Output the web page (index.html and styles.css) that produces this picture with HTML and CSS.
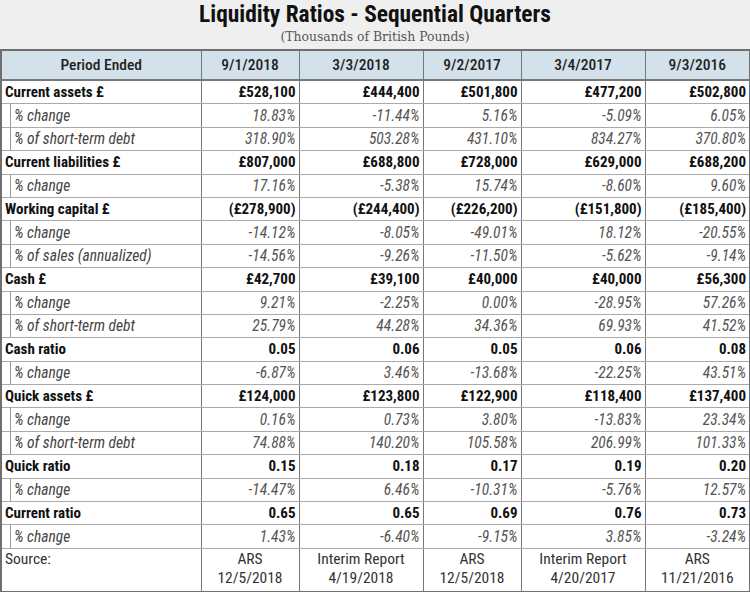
FILE: index.html
```html
<!DOCTYPE html>
<html>
<head>
<meta charset="utf-8">
<link rel="stylesheet" href="styles.css">
</head>
<body>
<div class="page">
  <h1 class="title">Liquidity Ratios - Sequential Quarters</h1>
  <div class="subtitle">(Thousands of British Pounds)</div>
  <table class="ratios">
    <colgroup>
      <col class="c-label"><col class="c-a"><col class="c-b"><col class="c-a"><col class="c-b"><col class="c-c">
    </colgroup>
    <thead>
      <tr><th>Period Ended</th><th>9/1/2018</th><th>3/3/2018</th><th>9/2/2017</th><th>3/4/2017</th><th>9/3/2016</th></tr>
    </thead>
    <tbody>
      <tr class="main"><td>Current assets £</td><td>£528,100</td><td>£444,400</td><td>£501,800</td><td>£477,200</td><td>£502,800</td></tr>
      <tr class="sub"><td>% change</td><td>18.83%</td><td>-11.44%</td><td>5.16%</td><td>-5.09%</td><td>6.05%</td></tr>
      <tr class="sub"><td>% of short-term debt</td><td>318.90%</td><td>503.28%</td><td>431.10%</td><td>834.27%</td><td>370.80%</td></tr>
      <tr class="main"><td>Current liabilities £</td><td>£807,000</td><td>£688,800</td><td>£728,000</td><td>£629,000</td><td>£688,200</td></tr>
      <tr class="sub"><td>% change</td><td>17.16%</td><td>-5.38%</td><td>15.74%</td><td>-8.60%</td><td>9.60%</td></tr>
      <tr class="main"><td>Working capital £</td><td>(£278,900)</td><td>(£244,400)</td><td>(£226,200)</td><td>(£151,800)</td><td>(£185,400)</td></tr>
      <tr class="sub"><td>% change</td><td>-14.12%</td><td>-8.05%</td><td>-49.01%</td><td>18.12%</td><td>-20.55%</td></tr>
      <tr class="sub"><td>% of sales (annualized)</td><td>-14.56%</td><td>-9.26%</td><td>-11.50%</td><td>-5.62%</td><td>-9.14%</td></tr>
      <tr class="main"><td>Cash £</td><td>£42,700</td><td>£39,100</td><td>£40,000</td><td>£40,000</td><td>£56,300</td></tr>
      <tr class="sub"><td>% change</td><td>9.21%</td><td>-2.25%</td><td>0.00%</td><td>-28.95%</td><td>57.26%</td></tr>
      <tr class="sub"><td>% of short-term debt</td><td>25.79%</td><td>44.28%</td><td>34.36%</td><td>69.93%</td><td>41.52%</td></tr>
      <tr class="main"><td>Cash ratio</td><td>0.05</td><td>0.06</td><td>0.05</td><td>0.06</td><td>0.08</td></tr>
      <tr class="sub"><td>% change</td><td>-6.87%</td><td>3.46%</td><td>-13.68%</td><td>-22.25%</td><td>43.51%</td></tr>
      <tr class="main"><td>Quick assets £</td><td>£124,000</td><td>£123,800</td><td>£122,900</td><td>£118,400</td><td>£137,400</td></tr>
      <tr class="sub"><td>% change</td><td>0.16%</td><td>0.73%</td><td>3.80%</td><td>-13.83%</td><td>23.34%</td></tr>
      <tr class="sub"><td>% of short-term debt</td><td>74.88%</td><td>140.20%</td><td>105.58%</td><td>206.99%</td><td>101.33%</td></tr>
      <tr class="main"><td>Quick ratio</td><td>0.15</td><td>0.18</td><td>0.17</td><td>0.19</td><td>0.20</td></tr>
      <tr class="sub"><td>% change</td><td>-14.47%</td><td>6.46%</td><td>-10.31%</td><td>-5.76%</td><td>12.57%</td></tr>
      <tr class="main"><td>Current ratio</td><td>0.65</td><td>0.65</td><td>0.69</td><td>0.76</td><td>0.73</td></tr>
      <tr class="sub"><td>% change</td><td>1.43%</td><td>-6.40%</td><td>-9.15%</td><td>3.85%</td><td>-3.24%</td></tr>
      <tr class="source"><td>Source:</td><td>ARS<br>12/5/2018</td><td>Interim Report<br>4/19/2018</td><td>ARS<br>12/5/2018</td><td>Interim Report<br>4/20/2017</td><td>ARS<br>11/21/2016</td></tr>
    </tbody>
  </table>
</div>
</body>
</html>
```

FILE: styles.css
```css
html, body {
  margin: 0;
  padding: 0;
  background: #efefef;
}
.page {
  width: 750px;
  font-family: "Roboto Condensed", "Roboto", "Liberation Sans Narrow", sans-serif;
  font-stretch: condensed;
}
.title {
  margin: 0;
  height: 25px;
  text-align: center;
  font-size: 23.4px;
  font-weight: 700;
  line-height: 28px;
  color: #111;
}
.subtitle {
  text-align: center;
  font-family: "Roboto Slab", "DejaVu Serif", "Liberation Serif", serif;
  font-stretch: normal;
  font-size: 12.4px;
  font-weight: 300;
  line-height: 20px;
  height: 20px;
  padding-top: 2px;
  margin-bottom: 2px;
  color: #555;
}
.ratios {
  width: 749px;
  border-collapse: collapse;
  background: #fff;
  border: 2px solid #6f6f6f;
  table-layout: fixed;
  font-size: 15px;
}
.c-label { width: 200px; }
.c-a { width: 98px; }
.c-b { width: 124px; }
.c-c { width: 105px; }
.ratios th {
  background: #d3e1ea;
  height: 28px;
  padding: 0;
  font-weight: 500;
  font-size: 15.5px;
  color: #222;
  text-align: center;
  border: 1px solid #777;
  border-bottom: 2px solid #777;
}
.ratios td {
  height: 22.4px;
  padding: 0 3px 0 3px;
  text-align: right;
  border-top: 1px solid #aaa;
  border-bottom: 1px solid #aaa;
  border-left: 1px solid #777;
  border-right: 1px solid #777;
  white-space: nowrap;
  line-height: 18px;
}
.ratios td:first-child {
  text-align: left;
}
.main td {
  font-weight: 700;
  color: #111;
}
.sub td {
  font-style: italic;
  color: #555;
  font-weight: 400;
  font-size: 15.5px;
}
.sub td:first-child {
  padding-left: 12px;
  color: #444;
  box-shadow: inset 8px 0 0 #fff, inset 9px 0 0 #999;
}
.source td {
  height: 41px;
  text-align: center;
  vertical-align: top;
  padding-top: 1px;
  color: #333;
  font-weight: 400;
  font-size: 15.5px;
  line-height: 19px;
}
.source td:first-child {
  text-align: left;
}
```
